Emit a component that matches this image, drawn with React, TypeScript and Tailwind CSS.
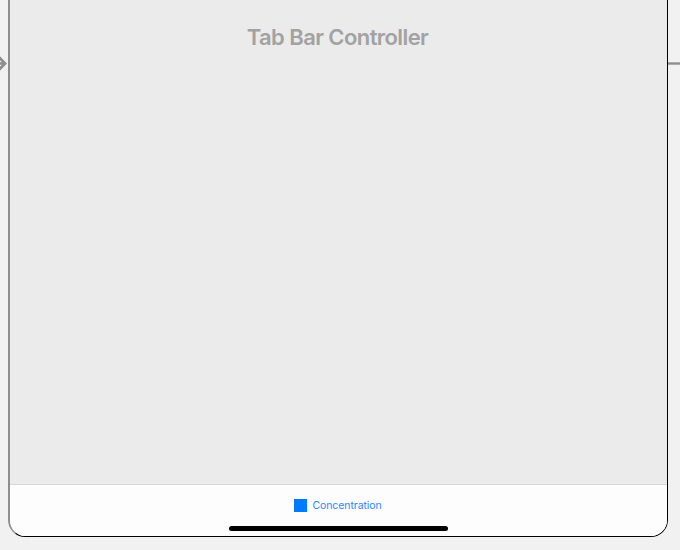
function IncomingArrow() {
  return (
    <svg className="mt-[56px] h-4 w-2 shrink-0" viewBox="0 0 8 16" fill="none" stroke="#8e8e8e">
      <path d="M0 7.5H5" strokeWidth="2.6" />
      <path d="M-1.5 0.8L5 7.5L-1.5 14.2" strokeWidth="2.8" />
    </svg>
  );
}

function TabBar() {
  return (
    <div className="flex h-[52px] flex-col items-center border-t border-[#d6d6d6] bg-[#fdfdfd]">
      <div className="mt-[14px] flex h-[13px] items-center gap-[5px] pr-px">
        <span className="size-[13px] bg-[#007aff]" />
        <span className="text-[10.5px] leading-[13px] tracking-[-0.08px] text-[#2f86f6]">
          Concentration
        </span>
      </div>
      <div className="mt-[14px] h-[5px] w-[219px] rounded-full bg-black" />
    </div>
  );
}

export default function App() {
  return (
    <div className="flex h-[550px] w-[680px] overflow-hidden bg-[#f1f1f1] font-['Inter','Liberation_Sans',sans-serif]">
      <IncomingArrow />
      <main className="flex h-[537px] w-[660px] shrink-0 flex-col overflow-hidden rounded-b-[17px] border-r border-b border-l-2 border-r-black border-b-black border-l-[#8e8e8e] bg-[#ebebeb]">
        <div className="flex-1 pt-[23px] pr-[2px] text-center">
          <h1 className="text-[22px] leading-[28px] font-semibold tracking-[-0.58px] text-[#a2a2a2]">
            Tab Bar Controller
          </h1>
        </div>
        <TabBar />
      </main>
      <div className="mt-[62px] h-[3px] flex-1 border-y border-[#adadad] bg-[#8e8e8e]" />
    </div>
  );
}
